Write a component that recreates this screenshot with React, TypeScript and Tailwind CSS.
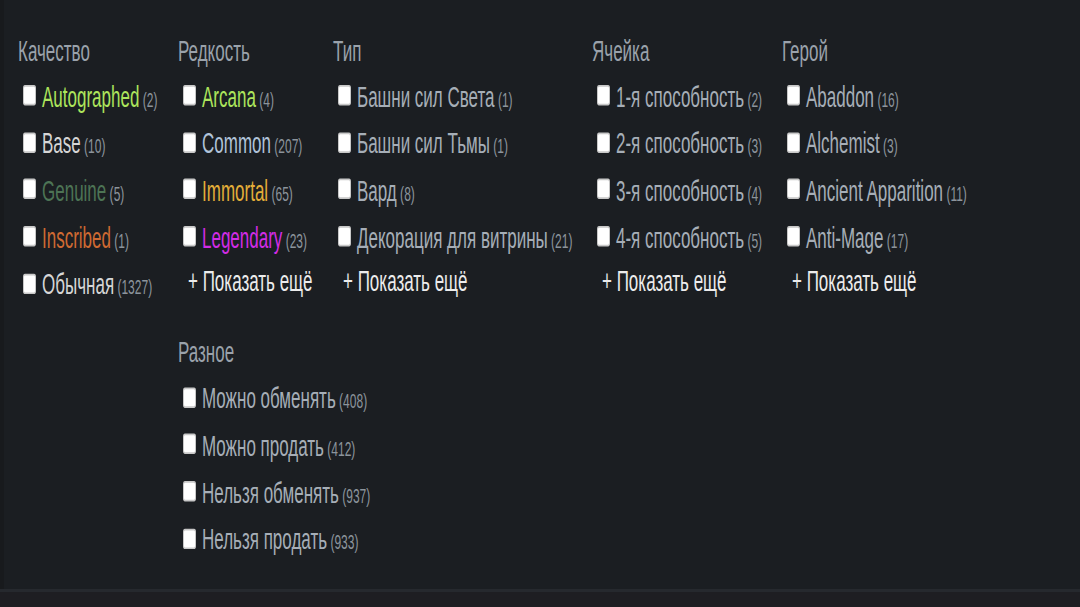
import React from "react"

interface Item {
  label: string
  count: number
  color?: string
}

interface Group {
  title: string
  items: Item[]
  more?: boolean
  className?: string
}

const groups: Group[] = [
  {
    title: "Качество",
    items: [
      { label: "Autographed", count: 2, color: "text-[#ade55c]" },
      { label: "Base", count: 10, color: "text-[#d6d6d6]" },
      { label: "Genuine", count: 5, color: "text-[#4d7455]" },
      { label: "Inscribed", count: 1, color: "text-[#cf6a32]" },
      { label: "Обычная", count: 1327, color: "text-[#d6d6d6]" },
    ],
  },
  {
    title: "Редкость",
    more: true,
    items: [
      { label: "Arcana", count: 4, color: "text-[#ade55c]" },
      { label: "Common", count: 207, color: "text-[#b0c3d9]" },
      { label: "Immortal", count: 65, color: "text-[#e4ae39]" },
      { label: "Legendary", count: 23, color: "text-[#d32ce6]" },
    ],
  },
  {
    title: "Тип",
    more: true,
    items: [
      { label: "Башни сил Света", count: 1 },
      { label: "Башни сил Тьмы", count: 1 },
      { label: "Вард", count: 8 },
      { label: "Декорация для витрины", count: 21 },
    ],
  },
  {
    title: "Ячейка",
    more: true,
    items: [
      { label: "1-я способность", count: 2 },
      { label: "2-я способность", count: 3 },
      { label: "3-я способность", count: 4 },
      { label: "4-я способность", count: 5 },
    ],
  },
  {
    title: "Герой",
    more: true,
    items: [
      { label: "Abaddon", count: 16 },
      { label: "Alchemist", count: 3 },
      { label: "Ancient Apparition", count: 11 },
      { label: "Anti-Mage", count: 17 },
    ],
  },
  {
    title: "Разное",
    className: "col-start-2 col-span-3",
    items: [
      { label: "Можно обменять", count: 408 },
      { label: "Можно продать", count: 412 },
      { label: "Нельзя обменять", count: 937 },
      { label: "Нельзя продать", count: 933 },
    ],
  },
]

function FilterGroup({ group }: { group: Group }) {
  return (
    <div className={group.className}>
      <div className="h-[20px] leading-[20px] text-[17px] text-[#9aa2ab]">{group.title}</div>
      <ul className="mt-[4px]">
        {group.items.map((item) => (
          <li key={item.label} className="flex h-[27.6px] items-center pl-[5px]">
            <input
              type="checkbox"
              className="mr-[6px] h-[12px] w-[13px] -translate-y-[2px] appearance-none rounded-[2px] border border-[#c8c8c8] bg-white"
            />
            <span className="whitespace-nowrap leading-[20px]">
              <span className={`text-[17px] ${item.color ?? "text-[#a6aeb7]"}`}>{item.label}</span>
              <span className="text-[12px] text-[#8c949c]"> ({item.count})</span>
            </span>
          </li>
        ))}
        {group.more && (
          <li className="flex h-[22px] items-center pl-[10px] text-[17px] whitespace-nowrap text-[#ececec]">
            + Показать ещё
          </li>
        )}
      </ul>
    </div>
  )
}

export default function App() {
  return (
    <div className="flex h-[607px] w-[1080px] flex-col overflow-hidden bg-[#1b1e22] font-['Liberation_Sans',Arial,sans-serif]">
      <div className="h-[589px] shrink-0 overflow-hidden border-l-[4px] border-[#181a1d]">
        <div className="origin-top-left scale-y-[1.7] pl-[14px] pt-[20.5px]">
          <div className="grid grid-cols-[160px_155px_259px_190px_1fr] gap-y-[15.6px]">
            {groups.map((g) => (
              <FilterGroup key={g.title} group={g} />
            ))}
          </div>
        </div>
      </div>
      <div className="h-[3px] shrink-0 bg-[#26292e]" />
      <div className="flex-1 bg-[#1e1e22]" />
    </div>
  )
}
